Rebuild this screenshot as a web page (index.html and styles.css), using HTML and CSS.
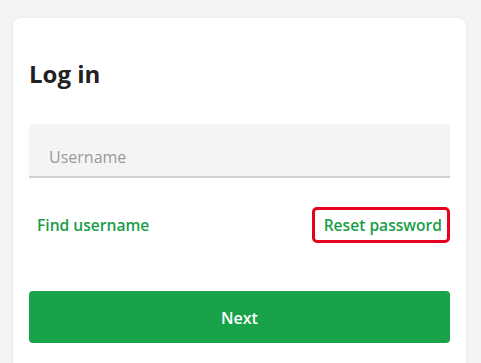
FILE: index.html
```html
<!DOCTYPE html>
<html lang="en">
<head>
<meta charset="utf-8">
<title>Log in</title>
<link rel="stylesheet" href="styles.css">
</head>
<body>
<main class="card">
  <h1 class="title">Log in</h1>
  <div class="field">
    <input class="input" type="text" placeholder="Username">
  </div>
  <div class="links">
    <a class="link" href="#">Find username</a>
    <a class="link link-focus" href="#">Reset password</a>
  </div>
  <button class="btn" type="button">Next</button>
</main>
</body>
</html>
```

FILE: styles.css
```css
html, body {
  margin: 0;
  padding: 0;
  background: #f4f4f4;
  font-family: "Open Sans", "Liberation Sans", sans-serif;
}
body {
  padding: 18px 15px 0 13px;
  height: 363px;
  box-sizing: border-box;
  overflow: hidden;
}
.card {
  background: #fff;
  border-radius: 8px;
  box-shadow: 0 0 4px rgba(0, 0, 0, 0.06);
  padding: 40px 16px 40px 16px;
  min-height: 420px;
  box-sizing: border-box;
  display: flex;
  flex-direction: column;
}
.title {
  margin: 0;
  font-size: 24px;
  line-height: 32px;
  font-weight: 700;
  color: #222;
}
.field {
  margin-top: 34px;
}
.input {
  display: block;
  width: 100%;
  box-sizing: border-box;
  height: 54px;
  border: none;
  border-bottom: 2px solid #cfcfcf;
  border-radius: 4px 4px 0 0;
  background: #f4f4f4;
  padding: 21px 20px 7px 20px;
  font-family: inherit;
  font-size: 16px;
  line-height: 24px;
  color: #222;
  outline: none;
}
.input::placeholder {
  color: #9a9a9a;
}
.links {
  margin-top: 29px;
  display: flex;
  justify-content: space-between;
  align-items: center;
}
.link {
  color: #1a9e48;
  font-size: 15.6px;
  font-weight: 600;
  line-height: 30px;
  text-decoration: none;
  padding: 0 8px;
}
.link-focus {
  border: 3px solid #e8001f;
  border-radius: 5px;
  padding: 0 5px 0 9px;
}
.btn {
  margin-top: 48px;
  height: 52px;
  width: 100%;
  border: none;
  border-radius: 4px;
  background: #18a34a;
  color: #fff;
  font-family: inherit;
  font-size: 16px;
  font-weight: 600;
  line-height: 24px;
  padding: 1px 0 0 0;
}
```
